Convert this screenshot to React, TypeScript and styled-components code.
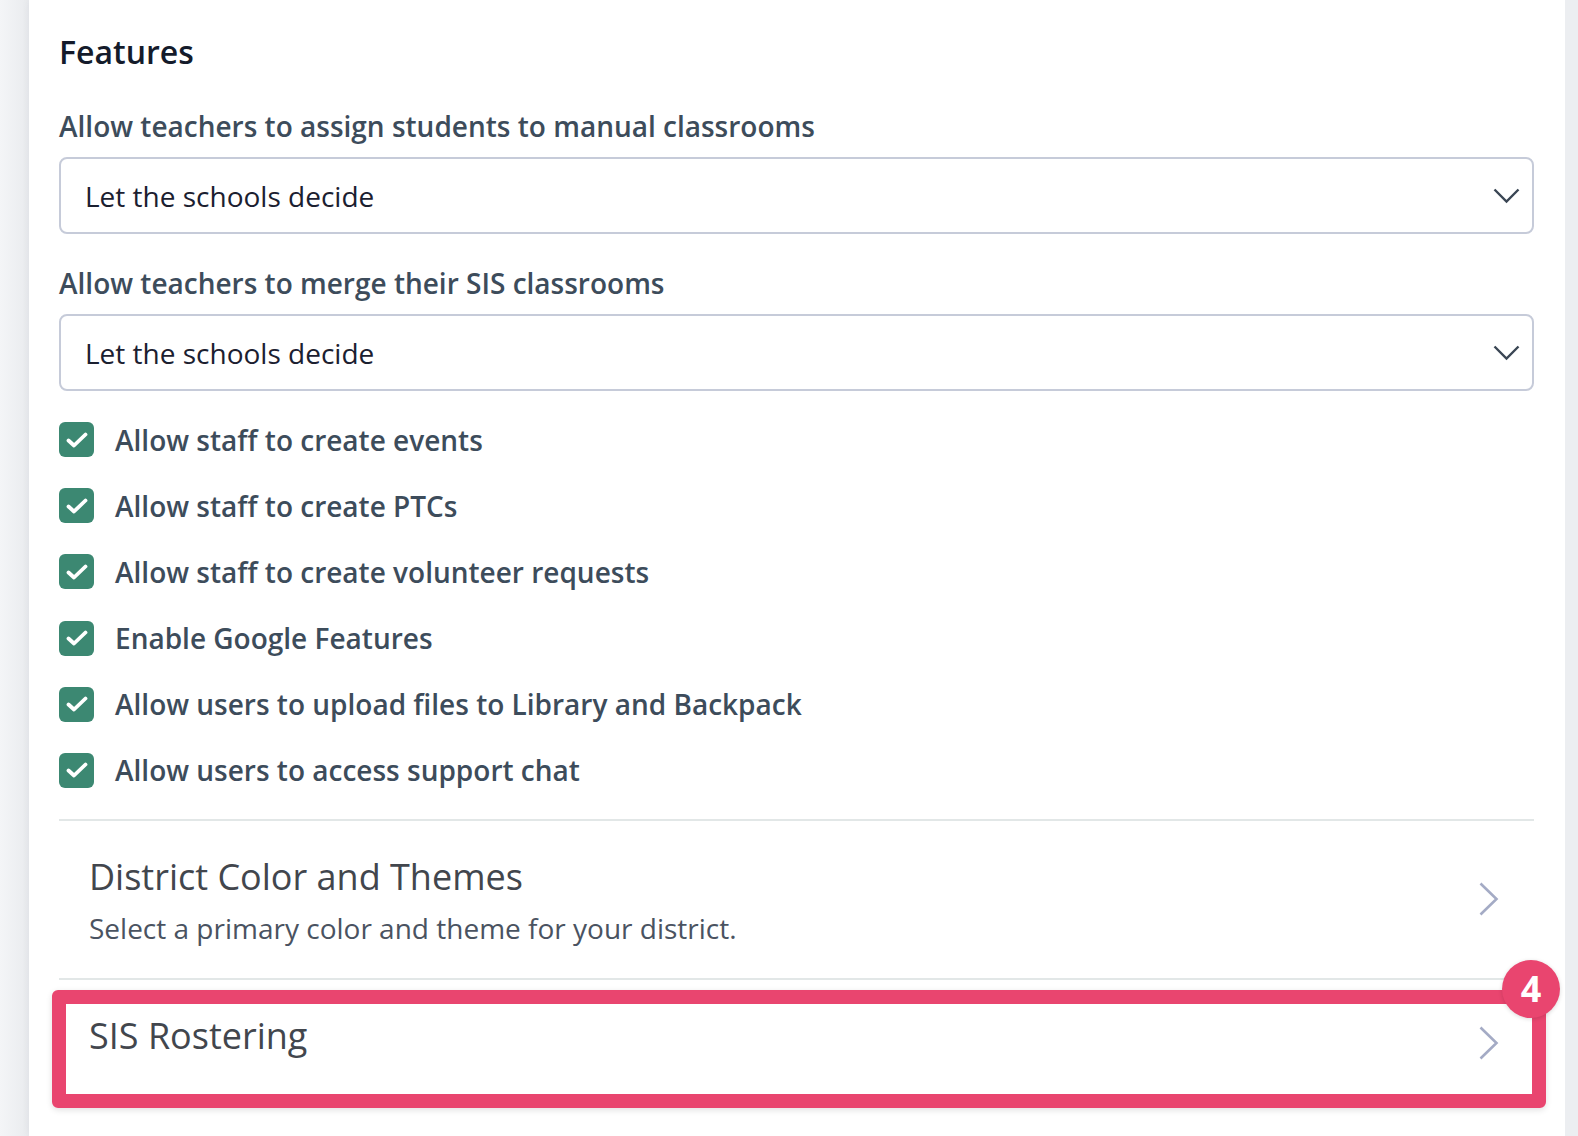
import React from 'react';
import styled, { createGlobalStyle } from 'styled-components';

const GlobalStyle = createGlobalStyle`
  html, body {
    margin: 0;
    padding: 0;
    background: #eef0f2;
    font-family: 'Open Sans', 'Noto Sans', sans-serif;
  }
  * {
    box-sizing: border-box;
  }
`;

const Page = styled.div`
  display: flex;
  min-height: 100vh;
  background: linear-gradient(90deg, #f4f5f7 0, #e9ebee 29px, #eceef1 29px);
`;

const LeftGutter = styled.div`
  width: 29px;
  flex: none;
`;

const RightGutter = styled.div`
  width: 13px;
  flex: none;
  background: #eceef1;
`;

const Panel = styled.main`
  flex: 1;
  background: #ffffff;
  padding: 30px 31px 0 30px;
  box-shadow: 0 0 8px rgba(30, 40, 60, 0.06);
`;

const Heading = styled.h2`
  margin: 0 0 33px;
  font-size: 32px;
  line-height: 44px;
  font-weight: 600;
  color: #141b2b;
`;

const Field = styled.div`
  display: flex;
  flex-direction: column;
  gap: 12px;
  margin-bottom: 30px;
`;

const FieldLabel = styled.label`
  font-size: 28px;
  line-height: 38px;
  font-weight: 600;
  color: #3d4c5b;
`;

const SelectBox = styled.div`
  display: flex;
  align-items: center;
  justify-content: space-between;
  height: 77px;
  padding: 0 12px 0 24px;
  border: 2px solid #c6cbd9;
  border-radius: 8px;
  font-size: 28px;
  color: #1b2030;
`;

const CheckList = styled.div`
  display: flex;
  flex-direction: column;
  gap: 31.2px;
  margin-top: 31px;
  margin-bottom: 31px;
`;

const CheckRow = styled.div`
  display: flex;
  align-items: center;
  gap: 21px;
  height: 35px;
  font-size: 28px;
  font-weight: 600;
  color: #3d4c5b;
`;

const Box = styled.span<{ $checked: boolean }>`
  display: flex;
  align-items: center;
  justify-content: center;
  width: 35px;
  height: 35px;
  flex: none;
  border-radius: 6px;
  background: ${(p) => (p.$checked ? '#3c8872' : '#ffffff')};
`;

const NavRow = styled.div`
  position: relative;
  display: flex;
  align-items: center;
  justify-content: space-between;
  border-top: 2px solid #e2e7e7;
  padding: 0 35px 0 30px;
`;

const NavText = styled.div<{ $bottom: number }>`
  display: flex;
  flex-direction: column;
  gap: 8px;
  padding: 32px 0 ${(p) => p.$bottom}px;
`;

const NavTitle = styled.div`
  font-size: 36px;
  line-height: 48px;
  color: #42464d;
`;

const NavSub = styled.div`
  font-size: 28px;
  line-height: 38px;
  color: #4a5361;
`;

const Highlight = styled.div`
  position: absolute;
  left: -7px;
  right: -12px;
  top: 10px;
  height: 118px;
  border: 14px solid #e9456f;
  border-radius: 6px;
  box-shadow: 0 2px 6px rgba(0, 0, 0, 0.12);
  pointer-events: none;
`;

const Badge = styled.span`
  position: absolute;
  right: -28px;
  top: -44px;
  width: 58px;
  height: 58px;
  border-radius: 50%;
  background: #e9456f;
  color: #ffffff;
  font-size: 36px;
  font-weight: 700;
  line-height: 58px;
  text-align: center;
  box-shadow: 0 1px 4px rgba(0, 0, 0, 0.15);
`;

const ChevronDown = () => (
  <svg width="27" height="16" viewBox="0 0 27 16" fill="none">
    <polyline points="1.5,1.5 13.5,13.5 25.5,1.5" stroke="#3a4654" strokeWidth="2.4" />
  </svg>
);

const ChevronRight = () => (
  <svg width="20" height="34" viewBox="0 0 20 34" fill="none">
    <polyline points="1.5,1.5 17.5,17 1.5,32.5" stroke="#a4abc5" strokeWidth="2.6" />
  </svg>
);

const Check = () => (
  <svg width="22" height="18" viewBox="0 0 22 18" fill="none">
    <polyline points="2.5,9.5 8,14.5 19.5,3.5" stroke="#ffffff" strokeWidth="3.8" strokeLinecap="round" strokeLinejoin="round" />
  </svg>
);

const selects = [
  'Allow teachers to assign students to manual classrooms',
  'Allow teachers to merge their SIS classrooms',
];

const checks = [
  'Allow staff to create events',
  'Allow staff to create PTCs',
  'Allow staff to create volunteer requests',
  'Enable Google Features',
  'Allow users to upload files to Library and Backpack',
  'Allow users to access support chat',
];

export default function App() {
  return (
    <>
      <GlobalStyle />
      <Page>
        <LeftGutter />
        <Panel>
          <Heading>Features</Heading>

          {selects.map((label) => (
            <Field key={label}>
              <FieldLabel>{label}</FieldLabel>
              <SelectBox>
                <span>Let the schools decide</span>
                <ChevronDown />
              </SelectBox>
            </Field>
          ))}

          <CheckList>
            {checks.map((c) => (
              <CheckRow key={c}>
                <Box $checked>
                  <Check />
                </Box>
                {c}
              </CheckRow>
            ))}
          </CheckList>

          <NavRow>
            <NavText $bottom={31}>
              <NavTitle>District Color and Themes</NavTitle>
              <NavSub>Select a primary color and theme for your district.</NavSub>
            </NavText>
            <ChevronRight />
          </NavRow>

          <NavRow>
            <NavText $bottom={46}>
              <NavTitle>SIS Rostering</NavTitle>
            </NavText>
            <ChevronRight />
            <Highlight>
              <Badge>4</Badge>
            </Highlight>
          </NavRow>
        </Panel>
        <RightGutter />
      </Page>
    </>
  );
}
